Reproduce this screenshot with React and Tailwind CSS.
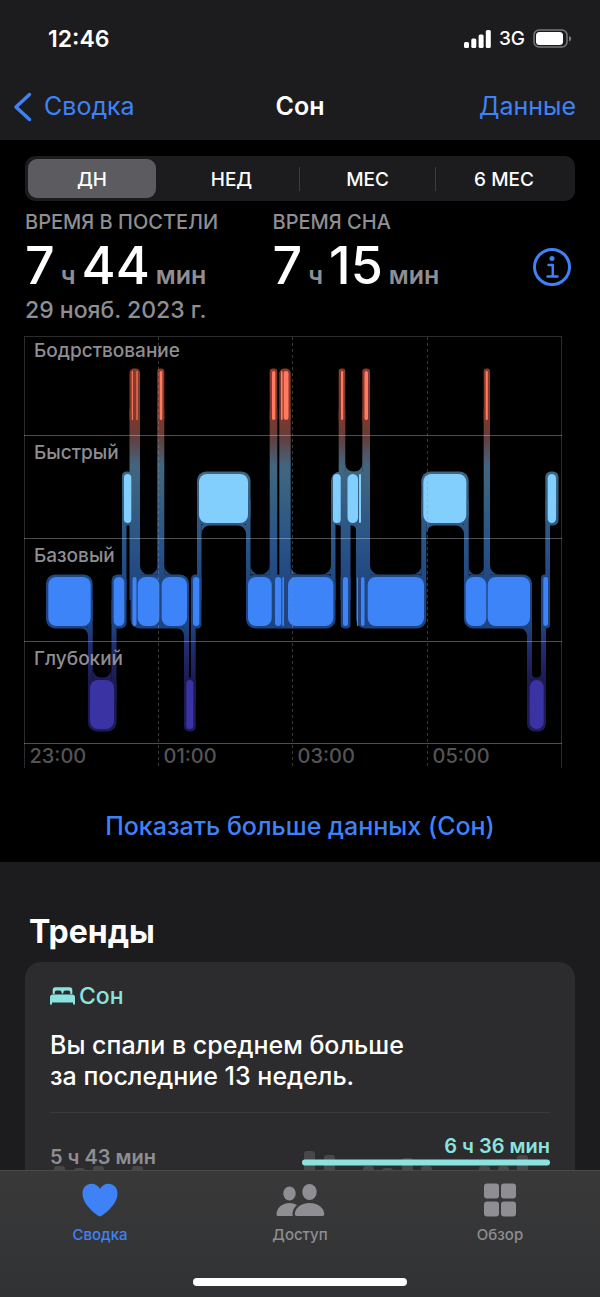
import { useState } from 'react'

const RANGES = ['ДН', 'НЕД', 'МЕС', '6 МЕС']

// Sleep stages: top and height of the filled block on the chart
const STAGES = {
  awake: { y: 371, h: 49, color: '#ff7a5f', label: 'Бодрствование', labelY: 357 },
  rem: { y: 474, h: 49, color: '#82cffd', label: 'Быстрый', labelY: 459 },
  core: { y: 577, h: 49, color: '#3c84f8', label: 'Базовый', labelY: 562 },
  deep: { y: 680, h: 49, color: '#3933a3', label: 'Глубокий', labelY: 665 },
}

// [stage, start, end]
const SEGMENTS = [
  ['core', 48.3, 90.7],
  ['deep', 90, 114],
  ['core', 113.7, 124.3],
  ['rem', 124, 131.3],
  ['awake', 131.8, 132.9],
  ['core', 132.5, 136.5],
  ['awake', 136.4, 137.6],
  ['core', 137.7, 159.3],
  ['awake', 159.7, 162.3],
  ['core', 161.7, 187],
  ['deep', 186.3, 193.3],
  ['core', 193, 199.3],
  ['rem', 199, 248],
  ['core', 248, 271.7],
  ['awake', 272, 275.3],
  ['core', 275, 281.3],
  ['awake', 281, 282.6],
  ['core', 282.3, 284],
  ['awake', 283.7, 288.5],
  ['core', 288, 333.3],
  ['rem', 333, 340.7],
  ['awake', 341, 343.2],
  ['core', 343, 348],
  ['rem', 347.5, 358],
  ['core', 357, 358],
  ['rem', 359, 361],
  ['core', 361, 364.5],
  ['awake', 364.5, 368],
  ['core', 367.7, 424],
  ['rem', 423.3, 466.3],
  ['core', 465.7, 486.3],
  ['awake', 485.7, 487.8],
  ['core', 487.7, 530],
  ['deep', 529.7, 543.7],
  ['core', 543.3, 548],
  ['rem', 547.7, 556],
]

// [stage, start, end] soft outline around each group of blocks
const HALOS = [
  ['awake', 129.5, 140], ['awake', 157.3, 164.3], ['awake', 269.7, 277.3], ['awake', 279.3, 290.7],
  ['awake', 338.7, 345.3], ['awake', 362.3, 370], ['awake', 483.7, 490],
  ['rem', 122, 132], ['rem', 197, 250.5], ['rem', 331, 370], ['rem', 421.3, 468.7], ['rem', 545.3, 558.5],
  ['core', 46, 92.7], ['core', 111.5, 126.5], ['core', 130.5, 189], ['core', 191, 201.5], ['core', 246, 335.5],
  ['core', 340.7, 350.5], ['core', 356, 426.3], ['core', 464, 532], ['core', 541, 550],
  ['deep', 88, 116.5], ['deep', 184, 195.7], ['deep', 527, 546],
]

// [x1, x2, y1, y2] vertical links between the stages
const LINKS = [
  [129.5, 140, 410, 600], [157.3, 164.3, 410, 600], [269.7, 277.3, 410, 600], [279.3, 290.7, 410, 600],
  [338.7, 345.3, 410, 490], [362.3, 370, 410, 490], [483.7, 490, 410, 600],
  [122, 126.5, 500, 600], [197, 201.5, 500, 600], [246, 250.5, 500, 600], [331, 335.5, 500, 600],
  [340.7, 350.5, 500, 600], [356, 370, 500, 600], [421.3, 426.3, 500, 600], [464, 468.7, 500, 600],
  [545.3, 550, 500, 600], [88, 92.7, 600, 700], [111.5, 116.5, 600, 700], [184, 189, 600, 700],
  [191, 195.7, 600, 700], [527, 532, 600, 700], [541, 546, 600, 700],
]

// [x, y, dx, dy, r] rounded inner corners where a link meets a block
const FILLETS = [
  [140, 574.5, 1, -1, 8.6], [157.3, 574.5, -1, -1, 8.6], [164.3, 574.5, 1, -1, 9], [250.5, 574.5, 1, -1, 9],
  [269.7, 574.5, -1, -1, 9], [290.7, 574.5, 1, -1, 9], [331, 574.5, -1, -1, 9], [370, 574.5, 1, -1, 9],
  [421.3, 574.5, -1, -1, 9], [468.7, 574.5, 1, -1, 7.5], [483.7, 574.5, -1, -1, 7.5], [490, 574.5, 1, -1, 9],
  [88, 628, -1, 1, 8], [184, 628, -1, 1, 8], [527, 628, -1, 1, 8],
  [201.5, 525, 1, 1, 9], [246, 525, -1, 1, 9], [426.3, 525, 1, 1, 9], [464, 525, -1, 1, 9], [356, 525, -1, 1, 5],
  [345.3, 472, 1, -1, 8.5], [362.3, 472, -1, -1, 8.5],
  [92.7, 678, 1, -1, 9.4], [111.5, 678, -1, -1, 9.4], [532, 678, 1, -1, 4.5], [541, 678, -1, -1, 4.5],
]

const TICKS = [
  { x: 24.5, label: '23:00' },
  { x: 158.5, label: '01:00' },
  { x: 292.5, label: '03:00' },
  { x: 427.5, label: '05:00' },
]

const SleepChart = () => (
  <svg viewBox="25 334 550 436" className="block w-full overflow-visible" role="img" aria-label="Фазы сна">
    <defs>
      <linearGradient id="halo" gradientUnits="userSpaceOnUse" x1="0" y1="368" x2="0" y2="732">
        <stop offset="0" stopColor="#8c3a2a" />
        <stop offset="0.14" stopColor="#7c392d" />
        <stop offset="0.19" stopColor="#633d3c" />
        <stop offset="0.27" stopColor="#426680" />
        <stop offset="0.36" stopColor="#365f80" />
        <stop offset="0.47" stopColor="#2a5487" />
        <stop offset="0.6" stopColor="#204680" />
        <stop offset="0.71" stopColor="#1f4380" />
        <stop offset="0.76" stopColor="#202f72" />
        <stop offset="0.86" stopColor="#1d1a50" />
        <stop offset="1" stopColor="#1f1b58" />
      </linearGradient>
    </defs>

    <path d="M24.5 336.5H561.5M24.5 336V768M561.5 336V768" fill="none" stroke="#2c2c2e" />

    <g fill="url(#halo)">
      {LINKS.map(([x1, x2, y1, y2], i) => (
        <rect key={i} x={x1} y={y1} width={x2 - x1} height={y2 - y1} />
      ))}
      {HALOS.map(([stage, x1, x2], i) => (
        <rect
          key={i}
          x={x1}
          y={STAGES[stage].y - 2.5}
          width={x2 - x1}
          height={STAGES[stage].h + 5}
          rx={Math.min(9, (x2 - x1) / 2.4)}
        />
      ))}
      {FILLETS.map(([x, y, dx, dy, r], i) => (
        <path
          key={i}
          d={`M${x} ${y}L${x + dx * r} ${y}A${r} ${r} 0 0 ${dx === dy ? 0 : 1} ${x} ${y + dy * r}Z`}
        />
      ))}
    </g>

    {SEGMENTS.map(([stage, x1, x2], i) => (
      <rect
        key={i}
        x={x1}
        y={STAGES[stage].y}
        width={x2 - x1}
        height={STAGES[stage].h}
        rx={Math.min(8, (x2 - x1) / 2)}
        fill={STAGES[stage].color}
      />
    ))}

    {/* Rows and hours */}
    <path d="M24 435.5H562M24 538.5H562M24 641.5H562M24 743.5H562" stroke="#fff" strokeOpacity="0.3" />
    <path d="M158.5 337V768M292.5 337V768M427.5 337V768" stroke="#8e8e93" strokeOpacity="0.4" strokeDasharray="3 3" />

    <g fontFamily="Inter, sans-serif" fontWeight="500">
      {Object.values(STAGES).map((s) => (
        <text key={s.label} x="34" y={s.labelY} fontSize="19" fill="#8e8e93">{s.label}</text>
      ))}
      {TICKS.map((t) => (
        <text key={t.label} x={t.x + 5} y="763" fontSize="20" fill="#545456">{t.label}</text>
      ))}
    </g>
  </svg>
)

const Duration = ({ title, hours, minutes }) => (
  <div>
    <h2 className="text-[20px] leading-6 font-medium text-[#8e8e93] whitespace-nowrap">{title}</h2>
    <p className="flex items-baseline gap-[6px] font-medium whitespace-nowrap">
      <span className="text-[52px] leading-[64px]">{hours}</span>
      <span className="text-[25px] leading-none font-semibold text-[#8e8e93]">ч</span>
      <span className="text-[52px] leading-[64px]">{minutes}</span>
      <span className="text-[25px] leading-none font-semibold text-[#8e8e93]">мин</span>
    </p>
  </div>
)

const StatusBar = () => (
  <div className="flex h-[78px] items-center justify-between pl-12 pr-7">
    <span className="text-[23px] font-semibold">12:46</span>
    <div className="flex items-center gap-2">
      <svg width="27" height="18" viewBox="0 0 27 18" fill="#fff">
        <rect x="0" y="12" width="5" height="6" rx="1.5" />
        <rect x="7.3" y="8.5" width="5" height="9.5" rx="1.5" />
        <rect x="14.6" y="4.5" width="5" height="13.5" rx="1.5" />
        <rect x="21.8" y="0" width="5" height="18" rx="1.5" />
      </svg>
      <span className="text-[19px] font-medium">3G</span>
      <svg width="39" height="20" viewBox="0 0 39 20">
        <rect x="1" y="1" width="33" height="17" rx="5" fill="none" stroke="#77777a" strokeWidth="1.5" />
        <rect x="3" y="3" width="27" height="13" rx="3.5" fill="#fff" />
        <path d="M36 7c3 .8 3 4.7 0 5.5z" fill="#77777a" />
      </svg>
    </div>
  </div>
)

const BedIcon = () => (
  <svg width="25" height="18" viewBox="0 0 25 18" fill="#8be3df">
    <path d="M2.7 7V2.8Q2.7.3 5.2.3H19.8Q22.3.3 22.3 2.8V7H20.3V5.6Q20.3 3.6 18.3 3.6H15.5Q13.3 3.6 13.3 5.6V6.5H11.7V5.6Q11.7 3.6 9.5 3.6H6.7Q4.7 3.6 4.7 5.6V7Z" />
    <path d="M0 17V10.5Q0 7.5 3 7.5H22Q25 7.5 25 10.5V17Q25 17.8 24 17.8T23 17V15.4H2V17Q2 17.8 1 17.8T0 17Z" />
  </svg>
)

const HeartIcon = () => (
  <svg width="36" height="34" viewBox="0 0 36 34" fill="currentColor">
    <path d="M18 33.5C16.5 33.5 .5 22.5 .5 10.5C.5 4.7 4.5 .8 9.5 .8C13.2 .8 16.3 2.8 18 6C19.7 2.8 22.8 .8 26.5 .8C31.5 .8 35.5 4.7 35.5 10.5C35.5 22.5 19.5 33.5 18 33.5Z" />
  </svg>
)

const PeopleIcon = () => (
  <svg width="49" height="34" viewBox="0 0 49 34" fill="currentColor">
    <ellipse cx="13.5" cy="10.5" rx="6.2" ry="7" />
    <ellipse cx="33.5" cy="9" rx="7.2" ry="8" />
    <path d="M2 33Q.5 33 .5 31.5C.5 25 6 20 13.5 20Q18 20 21 22C18 24.5 16.5 28 16.5 31Q16.5 32.3 17 33Z" />
    <path d="M20.5 33Q18.8 33 18.8 31.3C18.8 25.5 24.5 20 33.5 20S48.3 25.5 48.3 31.3Q48.3 33 46.6 33Z" />
  </svg>
)

const GridIcon = () => (
  <svg width="34" height="34" viewBox="0 0 34 34" fill="currentColor">
    <rect x="1" y="0.5" width="15" height="15" rx="3" />
    <rect x="18" y="0.5" width="15" height="15" rx="3" />
    <rect x="1" y="18.5" width="15" height="15" rx="3" />
    <rect x="18" y="18.5" width="15" height="15" rx="3" />
  </svg>
)

const TABS = [
  { label: 'Сводка', Icon: HeartIcon, active: true },
  { label: 'Доступ', Icon: PeopleIcon },
  { label: 'Обзор', Icon: GridIcon },
]

// [x, y] weekly bars on the trend preview
const TREND_BARS = [
  [4, 25], [24, 27], [43, 25], [82, 25],
  [254, 10], [274, 14], [313, 25], [332, 27], [352, 17], [371, 25], [429, 25], [448, 25], [467, 14],
]

const TrendPreview = () => (
  <svg viewBox="0 0 500 100" className="block w-full overflow-visible">
    {TREND_BARS.map(([x, y]) => (
      <rect key={x} x={x} y={y} width="11" height={100 - y} rx="3" fill="#48484a" />
    ))}
    <path d="M255 21.5H497" stroke="#8be3df" strokeWidth="6" strokeLinecap="round" />
    <g fontFamily="Inter, sans-serif" fontWeight="600" fontSize="20">
      <text x="0" y="23" fill="#8e8e93">5 ч 43 мин</text>
      <text x="500" y="12" fill="#8be3df" textAnchor="end">6 ч 36 мин</text>
    </g>
  </svg>
)

const App = () => {
  const [range, setRange] = useState('ДН')

  return (
    <div className="flex h-screen flex-col overflow-hidden bg-[#1c1c1e] font-['Inter',sans-serif] text-white">
      <header className="h-[140px] shrink-0">
        <StatusBar />
        <div className="grid h-[58px] grid-cols-3 items-center px-3 text-[25px]">
          <a href="#summary" className="flex items-center gap-3 text-[#3f82f7]">
            <svg width="20" height="30" viewBox="0 0 20 30" fill="none" stroke="currentColor" strokeWidth="3.5" strokeLinecap="round" strokeLinejoin="round">
              <path d="M17.5 2.5L4 15L17.5 27.5" />
            </svg>
            Сводка
          </a>
          <h1 className="text-center font-semibold">Сон</h1>
          <a href="#data" className="pr-3 text-right text-[#3f82f7]">Данные</a>
        </div>
      </header>

      <main className="min-h-0 flex-1 overflow-hidden">
        <section className="bg-black px-[25px] pt-4 pb-5">
          {/* Range switch */}
          <div className="grid h-[45px] grid-cols-4 rounded-[10px] bg-[#1c1c1f] p-[3px]">
            {RANGES.map((item, i) => (
              <div key={item} className={`flex items-center ${range === item ? 'pr-2' : ''}`}>
                <button
                  type="button"
                  onClick={() => setRange(item)}
                  className={`h-full flex-1 rounded-[9px] pt-0.5 text-[19px] leading-6 font-medium ${range === item ? 'bg-[#5b5b60]' : ''}`}
                >
                  {item}
                </button>
                {(i === 1 || i === 2) && <span className="h-6 w-px bg-[#3c3c40]" />}
              </div>
            ))}
          </div>

          <div className="mt-[9px] flex items-start">
            <div className="w-[45%]">
              <Duration title="ВРЕМЯ В ПОСТЕЛИ" hours="7" minutes="44" />
            </div>
            <div className="flex-1">
              <Duration title="ВРЕМЯ СНА" hours="7" minutes="15" />
            </div>
            <button type="button" aria-label="Информация" className="mt-[38px] mr-1 shrink-0">
              <svg width="38" height="38" viewBox="0 0 38 38" fill="none" stroke="#3f82f7">
                <circle cx="19" cy="19" r="17.5" strokeWidth="3" />
                <circle cx="19" cy="10.5" r="2.5" fill="#3f82f7" stroke="none" />
                <path d="M15.5 17H19.8V28.5M14.5 28.5H24.5" strokeWidth="2.5" strokeLinecap="round" strokeLinejoin="round" />
              </svg>
            </button>
          </div>
          <p className="text-[23px] leading-6 font-medium text-[#8e8e93]">29 нояб. 2023 г.</p>

          <div className="mt-3">
            <SleepChart />
          </div>

          <a href="#more" className="mt-10 block text-center text-[25px] leading-8 font-medium text-[#3f82f7]">
            Показать больше данных (Сон)
          </a>
        </section>

        <section className="px-[25px] pt-12">
          <h2 className="pl-1 text-[32px] leading-[44px] font-bold">Тренды</h2>
          <article className="mt-2 rounded-2xl bg-[#2c2c2e] px-[25px] pt-5">
            <h3 className="flex items-center gap-1 text-[23px] leading-7 font-medium text-[#8be3df]">
              <BedIcon />
              Сон
            </h3>
            <p className="mt-5 text-[25px] leading-[31px] font-medium">
              Вы спали в среднем больше<br />за последние 13 недель.
            </p>
            <div className="mt-5 mb-7 h-px bg-[#3a3a3c]" />
            <TrendPreview />
          </article>
        </section>
      </main>

      <nav className="flex h-[127px] shrink-0 flex-col items-center justify-between border-t border-[#4a4a4c] bg-linear-to-b from-[#39393a] to-[#313233] pt-3 pb-[11px]">
        <div className="grid w-full grid-cols-3">
          {TABS.map(({ label, Icon, active }) => (
            <a
              key={label}
              href={`#${label}`}
              className={`flex flex-col items-center gap-2 text-[15px] leading-5 font-medium ${active ? 'text-[#3f82f7]' : 'text-[#8e8e93]'}`}
            >
              <Icon />
              {label}
            </a>
          ))}
        </div>
        <div className="h-2 w-[214px] rounded-full bg-white" />
      </nav>
    </div>
  )
}

export default App
